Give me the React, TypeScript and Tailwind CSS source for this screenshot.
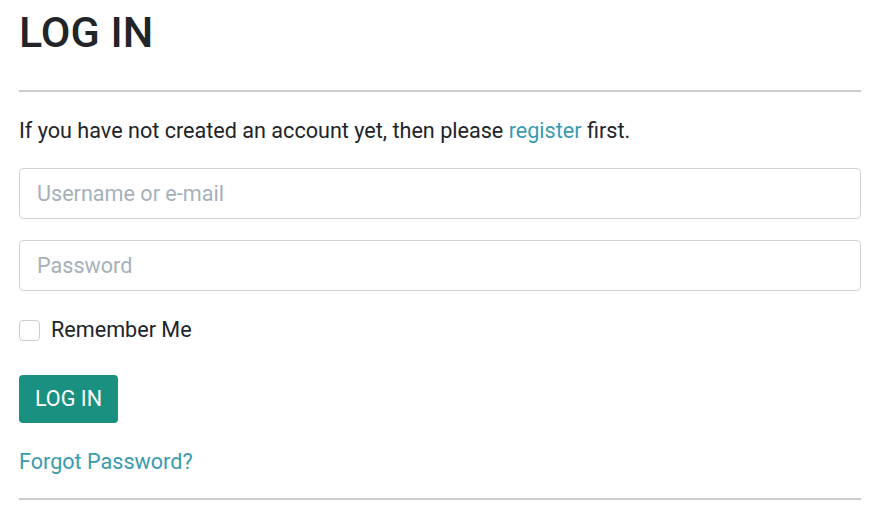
export default function App() {
  return (
    <div className="min-h-screen bg-white pl-[19px] pr-[20px] pt-[7px] text-[#212529] font-['Roboto',sans-serif]">
      <h1 className="text-[43px] leading-[1.2] font-medium">LOG IN</h1>
      <hr className="mt-[31px] border-0 border-t-2 border-[#cccccc]" />
      <p className="mt-[23px] text-[21.6px] leading-[1.5]">
        If you have not created an account yet, then please{' '}
        <a href="#" className="text-[#3a9bb0]">register</a> first.
      </p>
      <form className="mt-[21px] flex flex-col">
        <input
          type="text"
          placeholder="Username or e-mail"
          className="h-[51px] w-full rounded-[4px] border border-[#cfd4d9] px-[17px] text-[21.6px] placeholder:text-[#a6b0ba] outline-none"
        />
        <input
          type="password"
          placeholder="Password"
          className="mt-[21px] h-[51px] w-full rounded-[4px] border border-[#cfd4d9] px-[17px] text-[21.6px] placeholder:text-[#a6b0ba] outline-none"
        />
        <label className="mt-[23px] flex items-center gap-[11px] text-[21.6px] leading-[1.5]">
          <span className="h-[21px] w-[21px] rounded-[4px] border border-[#c9ced3] bg-white" />
          Remember Me
        </label>
        <div className="mt-[29px]">
          <button
            type="button"
            className="h-[48px] w-[99px] rounded-[4px] bg-[#1a9080] text-[21.6px] text-white"
          >
            LOG IN
          </button>
        </div>
        <a href="#" className="mt-[23px] self-start text-[21.6px] leading-[1.5] text-[#3a9bb0]">
          Forgot Password?
        </a>
      </form>
      <hr className="mt-[19px] border-0 border-t-2 border-[#cccccc]" />
    </div>
  );
}
